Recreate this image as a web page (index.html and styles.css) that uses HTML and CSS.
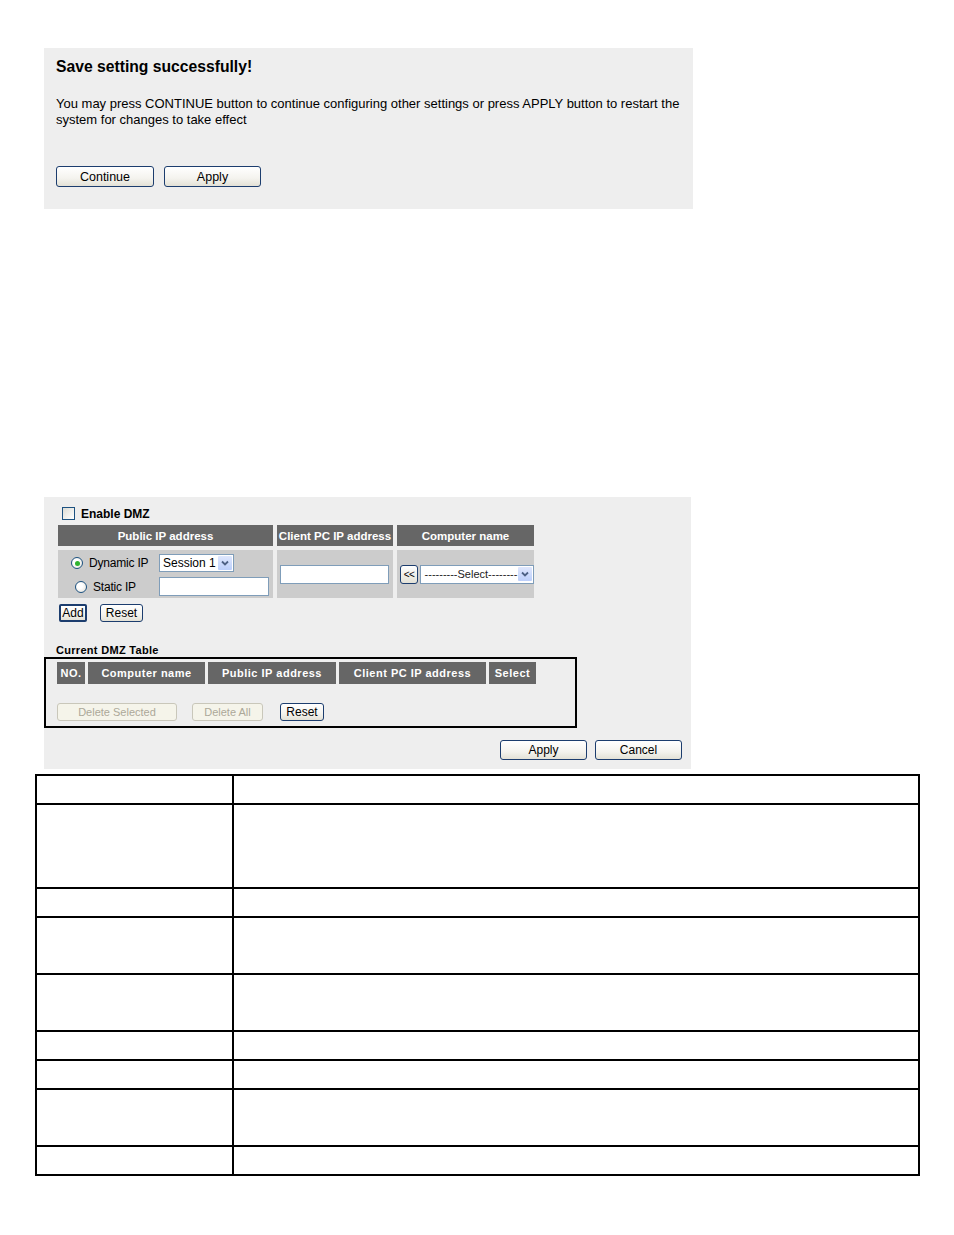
FILE: index.html
```html
<!DOCTYPE html>
<html>
<head>
<meta charset="utf-8">
<title>DMZ</title>
<link rel="stylesheet" href="styles.css">
</head>
<body>
<div class="page">
  <section class="save-panel">
    <h1 class="save-title">Save setting successfully!</h1>
    <p class="save-text">You may press CONTINUE button to continue configuring other settings or press APPLY button to restart the<br>system for changes to take effect</p>
    <div class="save-buttons">
      <span class="btn btn-continue">Continue</span>
      <span class="btn btn-apply1">Apply</span>
    </div>
  </section>

  <section class="dmz-panel">
    <div class="enable-row">
      <span class="checkbox"></span>
      <span class="enable-label">Enable DMZ</span>
    </div>

    <div class="dmz-grid">
      <div class="hd">Public IP address</div>
      <div class="hd">Client PC IP address</div>
      <div class="hd">Computer name</div>

      <div class="bd bd-public">
        <div class="ip-row">
          <span class="radio checked"></span>
          <span class="ip-label">Dynamic IP</span>
          <span class="select sel-session"><span class="sel-text">Session 1</span><span class="sel-arrow"><svg viewBox="0 0 14 14" width="14" height="14"><path d="M4 5.5 L7 8.5 L10 5.5" fill="none" stroke="#4d6185" stroke-width="1.8"/></svg></span></span>
        </div>
        <div class="ip-row ip-static">
          <span class="radio"></span>
          <span class="ip-label">Static IP</span>
          <span class="textbox tb-static"></span>
        </div>
      </div>
      <div class="bd bd-client">
        <span class="textbox tb-client"></span>
      </div>
      <div class="bd bd-name">
        <span class="btn-mini">&lt;&lt;</span>
        <span class="select sel-name"><span class="sel-text sel-center">---------Select--------</span><span class="sel-arrow"><svg viewBox="0 0 14 14" width="14" height="14"><path d="M4 5.5 L7 8.5 L10 5.5" fill="none" stroke="#4d6185" stroke-width="1.8"/></svg></span></span>
      </div>
    </div>

    <div class="add-row">
      <span class="btn btn-add">Add</span>
      <span class="btn btn-reset1">Reset</span>
    </div>

    <div class="caption">Current DMZ Table</div>
    <div class="current-box">
      <div class="cur-head">
        <div class="ch ch-no">NO.</div>
        <div class="ch ch-name">Computer name</div>
        <div class="ch ch-pub">Public IP address</div>
        <div class="ch ch-client">Client PC IP address</div>
        <div class="ch ch-sel">Select</div>
      </div>
      <div class="cur-buttons">
        <span class="btn btn-small disabled btn-delsel">Delete Selected</span>
        <span class="btn btn-small disabled btn-delall">Delete All</span>
        <span class="btn btn-small btn-reset2">Reset</span>
      </div>
    </div>

    <div class="final-row">
      <span class="btn btn-small btn-apply2">Apply</span>
      <span class="btn btn-small btn-cancel">Cancel</span>
    </div>
  </section>

  <table class="desc-table">
    <tr class="r29"><td class="c1"></td><td></td></tr>
    <tr class="r84"><td class="c1"></td><td></td></tr>
    <tr class="r29"><td class="c1"></td><td></td></tr>
    <tr class="r57"><td class="c1"></td><td></td></tr>
    <tr class="r57"><td class="c1"></td><td></td></tr>
    <tr class="r29"><td class="c1"></td><td></td></tr>
    <tr class="r29"><td class="c1"></td><td></td></tr>
    <tr class="r57"><td class="c1"></td><td></td></tr>
    <tr class="r29"><td class="c1"></td><td></td></tr>
  </table>
</div>
</body>
</html>
```

FILE: styles.css
```css
html, body {
  margin: 0;
  padding: 0;
  background: #ffffff;
}
body {
  font-family: "Liberation Sans", Arial, sans-serif;
  color: #000;
}
.page {
  width: 954px;
  padding-top: 48px;
}

/* ---------- Save panel ---------- */
.save-panel {
  margin-left: 44px;
  width: 649px;
  height: 161px;
  box-sizing: border-box;
  background: #eeeeee;
  padding: 10px 12px 0 12px;
}
.save-title {
  margin: 0;
  font-size: 15.7px;
  line-height: 18px;
  font-weight: bold;
}
.save-text {
  margin: 20px 0 0 0;
  font-size: 13px;
  line-height: 16px;
  white-space: nowrap;
}
.save-buttons {
  margin-top: 38px;
  display: flex;
  gap: 10px;
}

/* ---------- Buttons ---------- */
.btn {
  display: inline-flex;
  align-items: center;
  justify-content: center;
  box-sizing: border-box;
  border: 1px solid #1c3d6e;
  border-radius: 3px;
  background: linear-gradient(#ffffff 0%, #f4f3ee 60%, #e3e1d6 100%);
  color: #000;
  font-size: 12.5px;
}
.btn-continue { width: 98px; height: 21px; }
.btn-apply1 { width: 97px; height: 21px; }
.btn-small { font-size: 11px; height: 19px; }
.disabled {
  border-color: #c9c7ba;
  color: #aca899;
  background: #f5f4ea;
}

/* ---------- DMZ panel ---------- */
.dmz-panel {
  margin-top: 288px;
  margin-left: 44px;
  width: 647px;
  height: 272px;
  box-sizing: border-box;
  background: #eeeeee;
  padding-top: 9px;
}
.enable-row {
  height: 15px;
  display: flex;
  align-items: center;
  padding-left: 18px;
}
.checkbox {
  width: 11px;
  height: 11px;
  border: 1px solid #1c5180;
  background: linear-gradient(135deg, #dcdcd5, #ffffff);
  margin-right: 6px;
}
.enable-label {
  font-size: 12px;
  font-weight: bold;
}

.dmz-grid {
  margin-top: 4px;
  margin-left: 14px;
  display: grid;
  grid-template-columns: 215px 116px 137px;
  grid-template-rows: 21px 48px;
  gap: 4px;
}
.hd {
  background: #666666;
  color: #ffffff;
  font-size: 11.5px;
  font-weight: bold;
  display: flex;
  align-items: center;
  justify-content: center;
  white-space: nowrap;
  overflow: hidden;
}
.bd {
  background: #cccccc;
}
.bd-public {
  padding: 4px 0 0 13px;
  box-sizing: border-box;
}
.ip-row {
  display: flex;
  align-items: center;
  height: 18px;
}
.ip-static {
  margin-top: 5px;
  height: 19px;
  padding-left: 4px;
}
.radio {
  width: 10px;
  height: 10px;
  border: 1px solid #1c5180;
  border-radius: 50%;
  background: radial-gradient(circle at 40% 40%, #ffffff 30%, #dedcd3 100%);
  position: relative;
  flex: none;
}
.radio.checked::after {
  content: "";
  position: absolute;
  left: 2.5px;
  top: 2.5px;
  width: 5px;
  height: 5px;
  border-radius: 50%;
  background: #2fb32f;
}
.ip-label {
  font-size: 12px;
  margin-left: 6px;
  width: 70px;
  letter-spacing: -0.2px;
}
.ip-static .ip-label {
  width: 66px;
}
.select {
  display: inline-flex;
  align-items: center;
  box-sizing: border-box;
  background: #ffffff;
  border: 1px solid #7f9db9;
  height: 18px;
  padding: 1px;
}
.sel-text {
  flex: 1;
  font-size: 12px;
  padding-left: 2px;
  white-space: nowrap;
  overflow: hidden;
}
.sel-center {
  font-size: 11px;
  text-align: center;
  color: #222;
}
.sel-arrow {
  width: 14px;
  height: 14px;
  flex: none;
  background: linear-gradient(#dfe7fd, #bccffb);
  border-radius: 1px;
  display: flex;
}
.sel-session { width: 75px; }
.sel-name { width: 114px; height: 19px; }
.textbox {
  display: inline-block;
  box-sizing: border-box;
  background: #ffffff;
  border: 1px solid #7f9db9;
}
.tb-static { width: 110px; height: 19px; }

.bd-client {
  display: flex;
  align-items: center;
  padding-left: 3px;
}
.tb-client { width: 109px; height: 19px; }

.bd-name {
  display: flex;
  align-items: center;
  padding-left: 3px;
  gap: 2px;
}
.btn-mini {
  width: 18px;
  height: 19px;
  box-sizing: border-box;
  border: 1px solid #1c3d6e;
  border-radius: 3px;
  background: linear-gradient(#ffffff, #e3e1d6);
  font-size: 10px;
  display: flex;
  align-items: center;
  justify-content: center;
  letter-spacing: -0.5px;
}

.add-row {
  margin-top: 6px;
  display: flex;
  padding-left: 15px;
  gap: 13px;
}
.btn-add {
  width: 28px;
  height: 18px;
  border: 2px solid #1c3d6e;
  border-radius: 2px;
  font-size: 12px;
}
.btn-reset1 {
  width: 43px;
  height: 18px;
  font-size: 12px;
}

.caption {
  margin-top: 22px;
  padding-left: 12px;
  font-size: 11px;
  font-weight: bold;
  line-height: 13px;
  letter-spacing: 0.3px;
}
.current-box {
  width: 533px;
  height: 71px;
  box-sizing: border-box;
  border: 2px solid #000000;
  padding: 3px 0 0 11px;
}
.cur-head {
  display: flex;
  gap: 3px;
  height: 22px;
}
.ch {
  background: #666666;
  color: #ffffff;
  font-size: 11px;
  font-weight: bold;
  display: flex;
  align-items: center;
  justify-content: center;
  letter-spacing: 0.5px;
  white-space: nowrap;
}
.ch-no { width: 28px; }
.ch-name { width: 117px; }
.ch-pub { width: 128px; }
.ch-client { width: 147px; }
.ch-sel { width: 47px; }
.cur-buttons {
  margin-top: 19px;
  display: flex;
}
.btn-delsel { width: 120px; height: 18px; }
.btn-delall { width: 71px; height: 18px; margin-left: 15px; }
.btn-reset2 { width: 44px; height: 18px; margin-left: 17px; font-size: 12px; }

.final-row {
  margin-top: 12px;
  display: flex;
  justify-content: flex-end;
  padding-right: 9px;
  gap: 8px;
}
.btn-apply2, .btn-cancel {
  width: 87px;
  height: 20px;
  font-size: 12px;
}

/* ---------- Description table ---------- */
.desc-table {
  margin-top: 5px;
  margin-left: 35px;
  width: 885px;
  border-collapse: collapse;
  table-layout: fixed;
}
.desc-table td {
  border: 2px solid #000000;
  padding: 0;
}
.desc-table td.c1 {
  width: 195px;
}
.r29 td { height: 27px; }
.r84 td { height: 82px; }
.r57 td { height: 55px; }
```
